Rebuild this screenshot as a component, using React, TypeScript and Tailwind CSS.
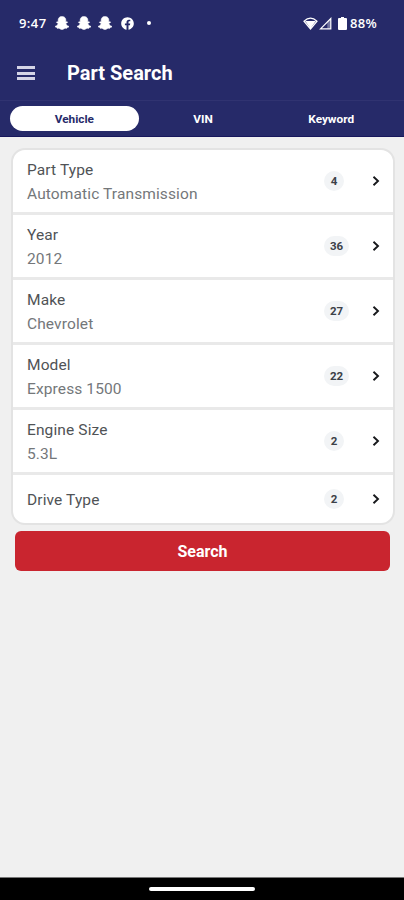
import { FaSnapchatGhost, FaFacebook } from "react-icons/fa";

type Row = { label: string; value?: string; count: number };

const rows: Row[] = [
  { label: "Part Type", value: "Automatic Transmission", count: 4 },
  { label: "Year", value: "2012", count: 36 },
  { label: "Make", value: "Chevrolet", count: 27 },
  { label: "Model", value: "Express 1500", count: 22 },
  { label: "Engine Size", value: "5.3L", count: 2 },
  { label: "Drive Type", count: 2 },
];

function StatusBar() {
  return (
    <div className="flex h-[46px] items-center pl-[19px] pr-[27px]">
      <span className="w-[36px] whitespace-nowrap font-['Open_Sans',sans-serif] text-[13px] font-semibold leading-none tracking-[0.4px]">9:47</span>
      <FaSnapchatGhost className="size-[14px]" stroke="white" strokeWidth="20" />
      <FaSnapchatGhost className="ml-[8px] size-[14px]" stroke="white" strokeWidth="20" />
      <FaSnapchatGhost className="ml-[7px] size-[14px]" stroke="white" strokeWidth="20" />
      <FaFacebook className="ml-[9px] size-[13px]" />
      <span className="ml-[13px] size-1 rounded-full bg-white" />
      <div className="ml-auto flex items-center">
        <svg width="15" height="13" viewBox="0 0 15 13">
          <path d="M1 4.200Q7.500-1.800 14 4.200L7.500 12Z" fill="none" stroke="white" strokeWidth="1.200" />
          <path d="M2.200 4H12.800L7.500 11.500Z" fill="white" />
        </svg>
        <svg className="ml-px" width="13" height="13" viewBox="0 0 13 13">
          <path d="M1.500 11.800 11.800 1.500V11.800Z" fill="none" stroke="white" strokeWidth="1.200" />
          <path d="M8.300 5 11.800 1.500V11.800H8.300Z" fill="white" fillOpacity="0.35" />
        </svg>
        <svg className="ml-[6px]" width="9" height="13" viewBox="0 0 9 13">
          <path d="M3 0h3v1H8q1 0 1 1V12q0 1-1 1H1q-1 0-1-1V2q0-1 1-1H3Z" fill="white" />
        </svg>
        <span className="ml-[3px] w-[27px] whitespace-nowrap font-['Open_Sans',sans-serif] text-[13px] font-semibold leading-none tracking-[0.3px]">88%</span>
      </div>
    </div>
  );
}

function SearchRow({ label, value, count }: Row) {
  return (
    <div className={`flex items-center border-b-[3px] border-[#e9e9e9] pl-[14px] pr-[11px] last:border-b-0 ${value ? "h-[65px]" : "h-[48px]"}`}>
      <div className={`flex-1 text-[15.5px] leading-[24px] tracking-[0.12px] ${value ? "pt-[2px]" : "pt-px"}`}>
        <div className="text-[#505356]">{label}</div>
        {value && <div className="text-[#74777a]">{value}</div>}
      </div>
      <div className="flex w-[43px]">
        <span className={`flex h-5 items-center justify-center rounded-full bg-[#f2f4f6] pt-px text-[11.5px] font-bold text-[#3c4148] ${count > 9 ? "w-[25px]" : "w-5"}`}>{count}</span>
      </div>
      <svg className="ml-[3px]" width="12" height="14" viewBox="0 0 12 14">
        <path d="M3.500 2.700 8 7 3.500 11.300" fill="none" stroke="#17191c" strokeWidth="1.900" />
      </svg>
    </div>
  );
}

export default function App() {
  return (
    <div className="flex h-[900px] w-[404px] flex-col overflow-hidden bg-[#f0f0f0] font-[Roboto,sans-serif]">
      <header className="h-[137px] shrink-0 border-b border-[#17175c] bg-[#262a69] text-white">
        <StatusBar />
        <div className="flex h-[54px] items-center pl-[17px]">
          <div className="flex w-[18px] flex-col gap-[2.5px]">
            <span className="h-[3px] bg-[#d4d4e6]" />
            <span className="h-[3px] bg-[#d4d4e6]" />
            <span className="h-[3px] bg-[#d4d4e6]" />
          </div>
          <h1 className="ml-[32px] text-[20px] font-bold leading-none">Part Search</h1>
        </div>
        <nav className="grid h-[36px] grid-cols-3 items-center border-t border-[#303371] pl-[10px] pr-[8px] text-center text-[11.8px] font-bold">
          <span className="flex h-[25px] items-center justify-center rounded-full bg-white pt-[2px] text-[#262a69]">Vehicle</span>
          <span className="pt-[2px]">VIN</span>
          <span className="pr-px pt-[2px]">Keyword</span>
        </nav>
      </header>
      <main className="flex-1 pl-[11px] pr-[9px] pt-[11px]">
        <section className="h-[377px] overflow-hidden rounded-[14px] border-2 border-[#e3e3e3] bg-white">
          {rows.map((row) => (
            <SearchRow key={row.label} {...row} />
          ))}
        </section>
        <button className="ml-[4px] mt-[6px] flex h-[40px] w-[375px] items-center justify-center rounded-[6px] bg-[#c9252f] pt-px text-[16px] font-bold text-white">Search</button>
      </main>
      <footer className="flex h-[23px] shrink-0 items-center justify-center border-t border-[#777] bg-black">
        <span className="h-1 w-[106px] rounded-full bg-white" />
      </footer>
    </div>
  );
}
